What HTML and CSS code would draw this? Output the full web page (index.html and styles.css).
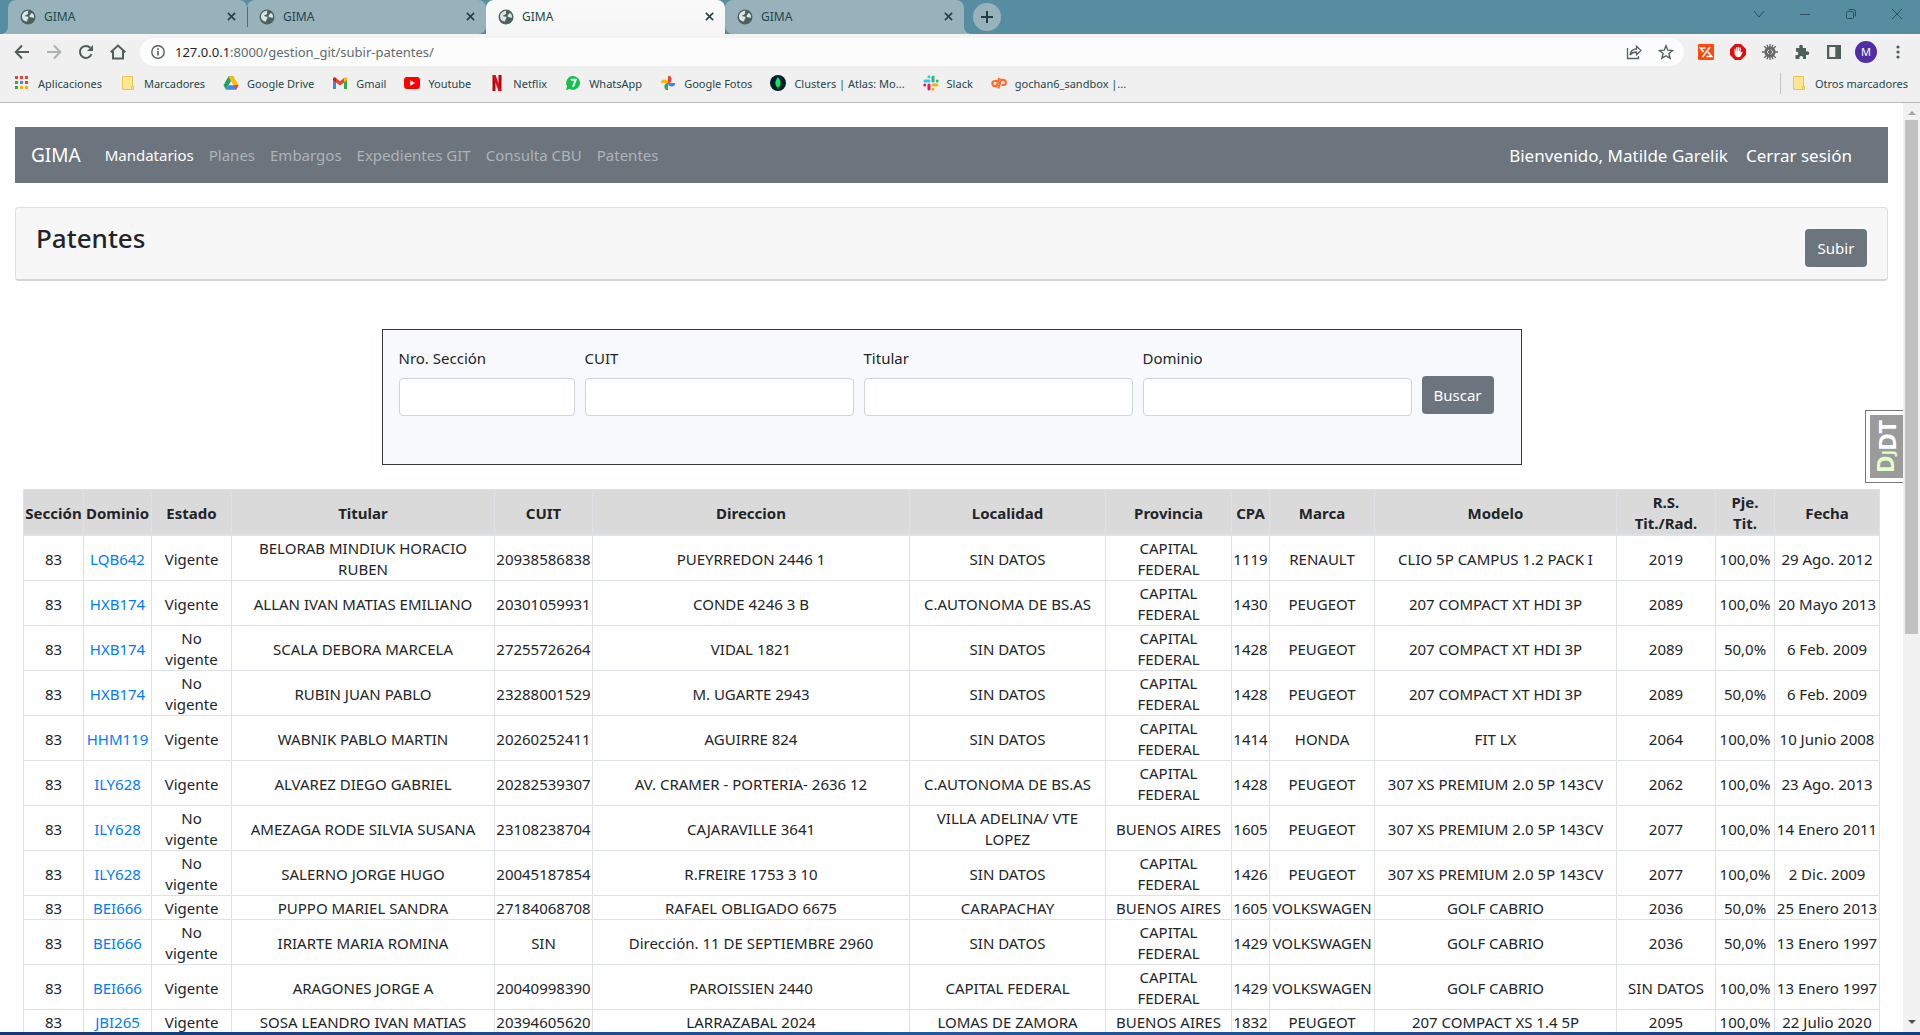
FILE: index.html
```html
<!DOCTYPE html>
<html lang="es">
<head>
<meta charset="utf-8">
<title>GIMA</title>
<link rel="stylesheet" href="styles.css">
</head>
<body>
<svg class="defs" aria-hidden="true">
  <symbol id="globe" viewBox="0 0 16 16"><circle cx="8" cy="8" r="7.5" fill="#4c615c"/><path d="M8.6 1.8c-1 .9-.9 2-.3 2.600.2.5-.9.700-1.200 1.100C6.500 6.300 5 6.200 4.800 7.200c1.400.3 3.200-.2 3.700 1.200.3 1-.9 1.500-1.100 2.300-.2.900-.1 1.700-1.300 1.900C3.400 12 1.900 10 2 7.300 2.300 4.100 5.300 1.600 8.600 1.800z" fill="#dbe6e6"/><path d="M11 4.500c.6-.5 1.500-.4 2 .2.700 1 1.200 2.400 1 3.800-.9.700-1.900-.1-3-.2-1-.1-2-.9-1.300-1.900.4-.6 1-.9 1.300-1.900z" fill="#dbe6e6"/></symbol>
  <symbol id="close" viewBox="0 0 10 10"><path d="M1 1l8 8M9 1L1 9" stroke="#213f40" stroke-width="1.700" fill="none"/></symbol>
  <symbol id="folder" viewBox="0 0 16 16"><path d="M2.500 1.500h10v10h1v3h-11z" fill="#ffe694" stroke="#e8c64e"/><path d="M11.500 14.500v-3h2v3z" fill="#ffe694" stroke="#e8c64e"/></symbol>
</svg>

<header class="browser">
  <div class="tabstrip">
    <div class="tab tab-first"><svg class="favicon"><use href="#globe"/></svg><span>GIMA</span><button class="tab-close" aria-label="Cerrar pestaña"><svg><use href="#close"/></svg></button></div>
    <div class="tab tab-divided"><svg class="favicon"><use href="#globe"/></svg><span>GIMA</span><button class="tab-close" aria-label="Cerrar pestaña"><svg><use href="#close"/></svg></button></div>
    <div class="tab tab-active"><svg class="favicon"><use href="#globe"/></svg><span>GIMA</span><button class="tab-close" aria-label="Cerrar pestaña"><svg><use href="#close"/></svg></button></div>
    <div class="tab tab-last"><svg class="favicon"><use href="#globe"/></svg><span>GIMA</span><button class="tab-close" aria-label="Cerrar pestaña"><svg><use href="#close"/></svg></button></div>
    <button class="new-tab" aria-label="Nueva pestaña"><svg width="14" height="14" viewBox="0 0 14 14"><path d="M7 1v12M1 7h12" stroke="#213f40" stroke-width="2"/></svg></button>
    <div class="window-controls">
      <button aria-label="Buscar pestañas"><svg width="12" height="12" viewBox="0 0 12 12"><path d="M1 3l5 6 5-6"/></svg></button>
      <button aria-label="Minimizar"><svg width="12" height="12" viewBox="0 0 12 12"><path d="M1 6.500h10"/></svg></button>
      <button aria-label="Restaurar"><svg width="12" height="12" viewBox="0 0 12 12"><rect x="1.500" y="3.500" width="7" height="7" rx="1"/><path d="M3.500 1.500h5a2 2 0 0 1 2 2v5"/></svg></button>
      <button aria-label="Cerrar"><svg width="12" height="12" viewBox="0 0 12 12"><path d="M1 1l10 10M11 1L1 11"/></svg></button>
    </div>
  </div>

  <div class="toolbar">
    <button class="tool" aria-label="Atrás"><svg width="16" height="16" viewBox="0 0 16 16"><path d="M15 8H2M8 1.500L1.800 8 8 14.500" fill="none" stroke="#4c615c" stroke-width="2"/></svg></button>
    <button class="tool" aria-label="Adelante"><svg width="16" height="16" viewBox="0 0 16 16"><path d="M1 8h13M8 1.500L14.200 8 8 14.500" fill="none" stroke="#abb3b1" stroke-width="2"/></svg></button>
    <button class="tool" aria-label="Recargar"><svg width="16" height="16" viewBox="0 0 16 16"><path d="M13.500 10.200A6 6 0 1 1 12.300 3.800" fill="none" stroke="#4c615c" stroke-width="2"/><path d="M15 1v6H9z" fill="#4c615c"/></svg></button>
    <button class="tool" aria-label="Inicio"><svg width="16" height="16" viewBox="0 0 16 16"><path d="M.7 8.200L8 1.500l7.300 6.700M3 7v7.500h10V7" fill="none" stroke="#4c615c" stroke-width="2"/></svg></button>
    <div class="omnibox">
      <svg width="14" height="14" viewBox="0 0 14 14"><circle cx="7" cy="7" r="6.200" fill="none" stroke="#53605f" stroke-width="1.400"/><path d="M7 6v4.500M7 3.200v1.600" stroke="#53605f" stroke-width="1.600"/></svg>
      <span class="url"><b>127.0.0.1</b>:8000/gestion_git/subir-patentes/</span>
      <button class="tool" aria-label="Compartir"><svg width="16" height="16" viewBox="0 0 16 16" fill="none" stroke="#53605f" stroke-width="1.300"><path d="M1.500 4v10.500h11V12"/><path d="M4 11c.6-4 3-6 6.500-6V2.200L15 6.500l-4.500 4.300V8C7.500 8 5.500 9 4 11z"/></svg></button>
      <button class="tool" aria-label="Añadir a marcadores"><svg width="16" height="16" viewBox="0 0 16 16"><path d="M8 1.800l1.800 4.400 4.700.3-3.600 3 1.200 4.700L8 11.700l-4.100 2.500 1.200-4.700-3.600-3 4.700-.3z" fill="none" stroke="#53605f" stroke-width="1.400"/></svg></button>
    </div>
    <button class="tool" aria-label="Extensión"><svg width="16" height="16" viewBox="0 0 16 16"><rect width="16" height="16" rx="1" fill="#ff4a0b"/><path d="M7.500 4H2.500l3 4M12 3L4.500 13M8.500 12.500h5l-3.500-4.500" fill="none" stroke="#fff" stroke-width="1.700"/></svg></button>
    <button class="tool" aria-label="Bloqueador"><svg width="16" height="16" viewBox="0 0 16 16"><path d="M5 0h6l5 5v6l-5 5H5l-5-5V5z" fill="#e40d0d"/><path d="M4.500 8.500V5.200c0-.8 1-.8 1 0V7h.6V3.700c0-.9 1.200-.9 1.200 0V7h.5V3.200c0-.9 1.200-.9 1.200 0V7h.5V4c0-.9 1.200-.9 1.200 0v5l.8-1.100c.6-.6 1.300-.1 1 .6L10.800 12c-.4.8-1.100 1.200-2.300 1.200-2.700 0-4-1.500-4-4.700z" fill="#fff"/></svg></button>
    <button class="tool" aria-label="Depurador"><svg width="16" height="16" viewBox="0 0 16 16"><path d="M8 0v16M0 8h16M2.300 2.300l11.400 11.400M13.700 2.300L2.300 13.700M5 .8l6 14.400M11 .8L5 15.200" stroke="#666" stroke-width="1.300"/><circle cx="8" cy="8" r="5.600" fill="#686868"/><path d="M7 6L5 8l2 2M9 5.500L11 8l-2 2.300" fill="none" stroke="#ddd"/></svg></button>
    <button class="tool" aria-label="Extensiones"><svg width="16" height="16" viewBox="0 0 16 16"><path d="M2 4h3.500C4.700 2 5.600.8 7 .8S9.300 2 8.700 4H12v3.600c2-.7 3.200.2 3.200 1.600S14 11.500 12 10.700V15H9c.4-2-.4-2.900-1.800-2.900S5 13 5.500 15H1.500v-4c1.800.5 2.800-.3 2.800-1.500S3.200 7.500 2 8z" fill="#4c615c"/></svg></button>
    <button class="tool" aria-label="Panel lateral"><svg width="16" height="16" viewBox="0 0 16 16"><path d="M1 1h14v14H1zM3.300 3v10h6V3z" fill="#4c615c" fill-rule="evenodd"/></svg></button>
    <button class="avatar" aria-label="Perfil">M</button>
    <button class="tool" aria-label="Menú"><svg width="16" height="16" viewBox="0 0 16 16" fill="#4c615c"><circle cx="8" cy="3" r="1.600"/><circle cx="8" cy="8" r="1.600"/><circle cx="8" cy="13" r="1.600"/></svg></button>
  </div>

  <nav class="bookmarks">
    <a href="#"><svg viewBox="0 0 16 16"><path d="M1 1h3v3H1zM6 1h3v3H6zM11 1h3v3h-3z" fill="#ea4335"/><path d="M1 6h3v3H1z" fill="#34a853"/><path d="M6 6h3v3H6z" fill="#4285f4"/><path d="M11 6h3v3h-3z" fill="#e94335"/><path d="M1 11h3v3H1z" fill="#34a853"/><path d="M6 11h3v3H6zM11 11h3v3h-3z" fill="#fbb00a"/></svg>Aplicaciones</a>
    <a href="#"><svg><use href="#folder"/></svg>Marcadores</a>
    <a href="#"><svg viewBox="0 0 16 16"><path d="M5.400 1.500h5.200L8 6z" fill="#188038"/><path d="M5.400 1.500L8 6l-5 8.700L.5 10.200z" fill="#1ea362"/><path d="M10.600 1.500l5 8.700h-5.200L5.400 1.500z" fill="#fbbc04"/><path d="M5.600 10.200h10L13 14.700H3z" fill="#4285f4"/><path d="M15.600 10.200L13 14.700l-2.600-4.500z" fill="#ea4335"/></svg>Google Drive</a>
    <a href="#"><svg viewBox="0 0 16 16"><path d="M1 3.500l3 2.300V14H1z" fill="#4285f4"/><path d="M15 3.500l-3 2.300V14h3z" fill="#34a853"/><path d="M4 3l4 3.200L12 3v4.600l-4 3-4-3z" fill="#ea4335"/><path d="M1 5V4c0-2 2-2.200 3-1v4.600z" fill="#c5221f"/><path d="M15 5V4c0-2-2-2.200-3-1v4.600z" fill="#fbbc04"/></svg>Gmail</a>
    <a href="#"><svg viewBox="0 0 16 16"><rect y="2" width="16" height="12" rx="3" fill="#f00"/><path d="M6.200 5.200L11 8l-4.800 2.800z" fill="#fff"/></svg>Youtube</a>
    <a href="#"><svg viewBox="0 0 16 16"><path d="M3.500 0h3v16h-3zM9.500 0h3v16h-3z" fill="#b1060f"/><path d="M3.500 0h3l6 16h-3z" fill="#e50914"/></svg>Netflix</a>
    <a href="#"><svg viewBox="0 0 16 16"><path d="M8.200 1a6.900 6.900 0 1 1-3.300 13L1 15l1.100-3.700A6.900 6.900 0 0 1 8.200 1z" fill="#12c24b"/><path d="M5.700 4.800h5L8 11.800" fill="none" stroke="#fff" stroke-width="2"/></svg>WhatsApp</a>
    <a href="#"><svg viewBox="0 0 16 16"><path d="M8 8V.8a3.600 3.600 0 0 1 0 7.200z" fill="#ea4335"/><path d="M8 8h7.200A3.600 3.600 0 0 1 8 8z" fill="#4285f4"/><path d="M8 8v7.200A3.600 3.600 0 0 1 8 8z" fill="#34a853"/><path d="M8 8H.8A3.600 3.600 0 0 1 8 8z" fill="#fbbc04"/></svg>Google Fotos</a>
    <a href="#"><svg viewBox="0 0 16 16"><circle cx="8" cy="8" r="8" fill="#001e2b"/><path d="M8 2c3.600 4.500 3.300 8 .3 10.500V14h-.6v-1.500C4.700 10 4.400 6.500 8 2z" fill="#00ed64"/></svg>Clusters | Atlas: Mo...</a>
    <a href="#"><svg viewBox="0 0 16 16" fill="none" stroke-width="3" stroke-linecap="round"><path d="M6 1.800v0M2 6h4" stroke="#36c5f0"/><path d="M10 2v4M14.200 6v0" stroke="#2eb67d"/><path d="M14 10h-4M10 14.200v0" stroke="#ecb22e"/><path d="M6 14v-4M1.800 10v0" stroke="#e01e5a"/></svg>Slack</a>
    <a href="#"><svg viewBox="0 0 16 16" fill="none" stroke="#ff6c2c" stroke-width="2.200"><path d="M6.500 6H4a2.600 2.600 0 0 0 0 5.200H5.500L8.300 3"/><path d="M7.300 13.500L10 4.800h2.200a2.600 2.600 0 0 1 0 5.200H10.500"/></svg>gochan6_sandbox |...</a>
    <a href="#" class="other"><svg><use href="#folder"/></svg>Otros marcadores</a>
  </nav>
</header>

<div class="viewport">
  <main class="page">
    <nav class="navbar">
      <a href="#" class="brand">GIMA</a>
      <div class="nav-links">
        <a href="#" class="nav-current">Mandatarios</a>
        <a href="#">Planes</a>
        <a href="#">Embargos</a>
        <a href="#">Expedientes GIT</a>
        <a href="#">Consulta CBU</a>
        <a href="#">Patentes</a>
      </div>
      <div class="session"><span>Bienvenido, Matilde Garelik</span><a href="#">Cerrar sesión</a></div>
    </nav>

    <section class="title-card">
      <h1>Patentes</h1>
      <button class="btn">Subir</button>
    </section>

    <form class="search">
      <div class="field"><label for="seccion">Nro. Sección</label><input id="seccion" type="text"></div>
      <div class="field"><label for="cuit">CUIT</label><input id="cuit" type="text"></div>
      <div class="field"><label for="titular">Titular</label><input id="titular" type="text"></div>
      <div class="field"><label for="dominio">Dominio</label><input id="dominio" type="text"></div>
      <button class="btn" type="button">Buscar</button>
    </form>

    <table class="plates">
      <colgroup><col class="c-seccion"><col class="c-dominio"><col class="c-estado"><col class="c-titular"><col class="c-cuit"><col class="c-direccion"><col class="c-localidad"><col class="c-provincia"><col class="c-cpa"><col class="c-marca"><col class="c-modelo"><col class="c-rs"><col class="c-pje"><col class="c-fecha"></colgroup>
      <thead>
        <tr><th>Sección</th><th>Dominio</th><th>Estado</th><th>Titular</th><th>CUIT</th><th>Direccion</th><th>Localidad</th><th>Provincia</th><th>CPA</th><th>Marca</th><th>Modelo</th><th>R.S.<br>Tit./Rad.</th><th>Pje.<br>Tit.</th><th>Fecha</th></tr>
      </thead>
      <tbody>
        <tr><td>83</td><td><a href="#">LQB642</a></td><td>Vigente</td><td>BELORAB MINDIUK HORACIO<br>RUBEN</td><td>20938586838</td><td>PUEYRREDON 2446 1</td><td>SIN DATOS</td><td>CAPITAL<br>FEDERAL</td><td>1119</td><td>RENAULT</td><td>CLIO 5P CAMPUS 1.2 PACK I</td><td>2019</td><td>100,0%</td><td>29 Ago. 2012</td></tr>
        <tr><td>83</td><td><a href="#">HXB174</a></td><td>Vigente</td><td>ALLAN IVAN MATIAS EMILIANO</td><td>20301059931</td><td>CONDE 4246 3 B</td><td>C.AUTONOMA DE BS.AS</td><td>CAPITAL<br>FEDERAL</td><td>1430</td><td>PEUGEOT</td><td>207 COMPACT XT HDI 3P</td><td>2089</td><td>100,0%</td><td>20 Mayo 2013</td></tr>
        <tr><td>83</td><td><a href="#">HXB174</a></td><td>No<br>vigente</td><td>SCALA DEBORA MARCELA</td><td>27255726264</td><td>VIDAL 1821</td><td>SIN DATOS</td><td>CAPITAL<br>FEDERAL</td><td>1428</td><td>PEUGEOT</td><td>207 COMPACT XT HDI 3P</td><td>2089</td><td>50,0%</td><td>6 Feb. 2009</td></tr>
        <tr><td>83</td><td><a href="#">HXB174</a></td><td>No<br>vigente</td><td>RUBIN JUAN PABLO</td><td>23288001529</td><td>M. UGARTE 2943</td><td>SIN DATOS</td><td>CAPITAL<br>FEDERAL</td><td>1428</td><td>PEUGEOT</td><td>207 COMPACT XT HDI 3P</td><td>2089</td><td>50,0%</td><td>6 Feb. 2009</td></tr>
        <tr><td>83</td><td><a href="#">HHM119</a></td><td>Vigente</td><td>WABNIK PABLO MARTIN</td><td>20260252411</td><td>AGUIRRE 824</td><td>SIN DATOS</td><td>CAPITAL<br>FEDERAL</td><td>1414</td><td>HONDA</td><td>FIT LX</td><td>2064</td><td>100,0%</td><td>10 Junio 2008</td></tr>
        <tr><td>83</td><td><a href="#">ILY628</a></td><td>Vigente</td><td>ALVAREZ DIEGO GABRIEL</td><td>20282539307</td><td>AV. CRAMER - PORTERIA- 2636 12</td><td>C.AUTONOMA DE BS.AS</td><td>CAPITAL<br>FEDERAL</td><td>1428</td><td>PEUGEOT</td><td>307 XS PREMIUM 2.0 5P 143CV</td><td>2062</td><td>100,0%</td><td>23 Ago. 2013</td></tr>
        <tr><td>83</td><td><a href="#">ILY628</a></td><td>No<br>vigente</td><td>AMEZAGA RODE SILVIA SUSANA</td><td>23108238704</td><td>CAJARAVILLE 3641</td><td>VILLA ADELINA/ VTE<br>LOPEZ</td><td>BUENOS AIRES</td><td>1605</td><td>PEUGEOT</td><td>307 XS PREMIUM 2.0 5P 143CV</td><td>2077</td><td>100,0%</td><td>14 Enero 2011</td></tr>
        <tr><td>83</td><td><a href="#">ILY628</a></td><td>No<br>vigente</td><td>SALERNO JORGE HUGO</td><td>20045187854</td><td>R.FREIRE 1753 3 10</td><td>SIN DATOS</td><td>CAPITAL<br>FEDERAL</td><td>1426</td><td>PEUGEOT</td><td>307 XS PREMIUM 2.0 5P 143CV</td><td>2077</td><td>100,0%</td><td>2 Dic. 2009</td></tr>
        <tr><td>83</td><td><a href="#">BEI666</a></td><td>Vigente</td><td>PUPPO MARIEL SANDRA</td><td>27184068708</td><td>RAFAEL OBLIGADO 6675</td><td>CARAPACHAY</td><td>BUENOS AIRES</td><td>1605</td><td>VOLKSWAGEN</td><td>GOLF CABRIO</td><td>2036</td><td>50,0%</td><td>25 Enero 2013</td></tr>
        <tr><td>83</td><td><a href="#">BEI666</a></td><td>No<br>vigente</td><td>IRIARTE MARIA ROMINA</td><td>SIN</td><td>Dirección. 11 DE SEPTIEMBRE 2960</td><td>SIN DATOS</td><td>CAPITAL<br>FEDERAL</td><td>1429</td><td>VOLKSWAGEN</td><td>GOLF CABRIO</td><td>2036</td><td>50,0%</td><td>13 Enero 1997</td></tr>
        <tr><td>83</td><td><a href="#">BEI666</a></td><td>Vigente</td><td>ARAGONES JORGE A</td><td>20040998390</td><td>PAROISSIEN 2440</td><td>CAPITAL FEDERAL</td><td>CAPITAL<br>FEDERAL</td><td>1429</td><td>VOLKSWAGEN</td><td>GOLF CABRIO</td><td>SIN DATOS</td><td>100,0%</td><td>13 Enero 1997</td></tr>
        <tr><td>83</td><td><a href="#">JBI265</a></td><td>Vigente</td><td>SOSA LEANDRO IVAN MATIAS</td><td>20394605620</td><td>LARRAZABAL 2024</td><td>LOMAS DE ZAMORA</td><td>BUENOS AIRES</td><td>1832</td><td>PEUGEOT</td><td>207 COMPACT XS 1.4 5P</td><td>2095</td><td>100,0%</td><td>22 Julio 2020</td></tr>
      </tbody>
    </table>
    <button class="debug-handle" aria-label="Django Debug Toolbar"><span class="debug-label"><span class="debug-dj">D<small>J</small></span>DT</span></button>
  </main>
  <div class="scrollbar">
    <svg width="8" height="4" viewBox="0 0 8 4"><path d="M0 4l4-4 4 4z" fill="#a3a3a3"/></svg>
    <div class="track"><div class="thumb"></div></div>
    <svg width="8" height="4" viewBox="0 0 8 4"><path d="M0 0l4 4 4-4z" fill="#505050"/></svg>
  </div>
</div>
<div class="desktop-edge"></div>
</body>
</html>
```
FILE: styles.css
```css
* { box-sizing: border-box; }
html, body { height: 100%; }
body {
  margin: 0;
  display: flex;
  flex-direction: column;
  overflow: hidden;
  background: #fff;
  color: #212529;
  font: 15px/21px "Noto Sans", "Open Sans", sans-serif;
}
a { color: inherit; text-decoration: none; }
button { font: inherit; color: inherit; border: 0; padding: 0; background: none; }
svg { display: block; flex: none; }
.defs { position: absolute; width: 0; height: 0; }

/* Browser window */
.browser { flex: none; background: #f0f0f0; border-bottom: 1px solid #b9b9b9; color: #24474a; }
.tabstrip { display: flex; height: 34px; padding-left: 8px; background: #568da1; }
.tab {
  position: relative;
  display: flex;
  align-items: center;
  gap: 8px;
  flex: 0 1 239px;
  padding: 0 11px 1px 12px;
  background: #97b2bb;
  border-radius: 8px;
  font-size: 12px;
}
.tab-active { background: linear-gradient(#fafafa, #f5f5f5); border-radius: 8px 8px 0 0; }
.tab-first { border-bottom-left-radius: 0; border-bottom-right-radius: 0; }
.tab-divided { border-bottom-left-radius: 0; }
.tab-last { border-bottom-right-radius: 0; }
.tab-first::before, .tab-last::after {
  content: "";
  position: absolute;
  bottom: 0;
  width: 8px;
  height: 8px;
}
.tab-first::before { left: -8px; background: radial-gradient(circle at 0 0, transparent 8px, #97b2bb 8px); }
.tab-last::after { right: -8px; background: radial-gradient(circle at 100% 0, transparent 8px, #97b2bb 8px); }
.tab-divided::before {
  content: "";
  position: absolute;
  left: 0;
  top: 7px;
  width: 1px;
  height: 20px;
  background: #486f79;
}
.favicon { width: 16px; height: 16px; }
.tab-close { margin-left: auto; }
.tab-close svg { width: 9px; height: 9px; }
.new-tab {
  display: grid;
  place-items: center;
  align-self: center;
  width: 28px;
  height: 28px;
  margin-left: 9px;
  border-radius: 50%;
  background: #97b2bb;
}
.window-controls { display: flex; gap: 34px; margin-left: auto; padding: 8px 17px 0 0; height: 20px; }
.window-controls svg { fill: none; stroke: #2f4f5a; stroke-width: 1; }

.toolbar {
  display: flex;
  align-items: center;
  gap: 16px;
  height: 36px;
  padding: 0 14px;
  background: linear-gradient(#f5f5f5, #f0f0f0 8px);
}
.omnibox {
  flex: 1;
  display: flex;
  align-items: center;
  gap: 16px;
  height: 28px;
  margin: 0 -2px;
  padding: 0 10px 0 11px;
  border-radius: 14px;
  background: #fcfcfc;
  font-size: 13px;
  color: #5f6b6e;
}
.url { flex: 1; margin-left: -6px; }
.url b { font-weight: 400; color: #1f2527; }
.avatar {
  width: 22px;
  height: 22px;
  margin: 0 -3px;
  border-radius: 50%;
  background: #512da8;
  color: #fff;
  font-size: 11px;
  line-height: 22px;
}
.bookmarks { display: flex; align-items: center; gap: 18px; height: 32px; padding: 0 12px 6px 14px; font-size: 11px; }
.bookmarks a { display: flex; align-items: center; gap: 8px; white-space: nowrap; }
.bookmarks svg { width: 16px; height: 16px; }
.bookmarks .other { margin-left: auto; padding-left: 10px; border-left: 1px solid #c0c4c4; }

/* Page */
.viewport { flex: 1; min-height: 0; display: flex; }
.page { position: relative; flex: 1; min-width: 0; overflow: hidden; padding: 24px 15px 0; }
.navbar { display: flex; align-items: center; height: 56px; padding: 0 36px 0 16px; background: #6c757d; color: #fff; }
.brand { margin-right: 24px; font-size: 19px; }
.nav-links { display: flex; gap: 15px; color: #aeb3b7; }
.nav-current { color: #fff; }
.session { display: flex; gap: 18px; margin-left: auto; font-size: 17px; }
.title-card {
  display: flex;
  justify-content: space-between;
  align-items: flex-start;
  height: 74px;
  margin-top: 24px;
  padding: 14px 20px 0;
  border: 1px solid #dfdfdf;
  border-bottom: 2px solid #d5d5d5;
  border-radius: 4px;
  background: #f7f7f7;
}
h1 { margin: 0; font-size: 26px; line-height: 32px; font-weight: 500; }
.btn { min-width: 62px; height: 38px; padding: 0 12px; border-radius: 4px; background: #6c757d; color: #fff; }
.title-card .btn { margin-top: 7px; }
.search {
  display: grid;
  grid-template-columns: 176px 1fr 1fr 1fr 72px;
  gap: 10px;
  max-width: 1140px;
  height: 136px;
  margin: 48px auto 24px;
  padding: 18px 27px 0 16px;
  border: 1px solid #343a40;
  background: #f8f9fc;
}
.search .btn { margin-top: 28px; }
.field { display: flex; flex-direction: column; gap: 9px; }
.field input {
  width: 100%;
  height: 38px;
  padding: 6px 12px;
  border: 1px solid #ced4da;
  border-radius: 4px;
  background: #fff;
  font: inherit;
}
.plates {
  width: calc(100% - 16px);
  margin-left: 8px;
  table-layout: fixed;
  border-collapse: collapse;
  text-align: center;
  white-space: nowrap;
}
.plates th, .plates td { padding: 2px 0 0; border: 1px solid #dee2e6; vertical-align: middle; }
.plates th { background: #dadada; border-bottom-width: 2px; font-weight: 700; }
.plates td a { color: #007bff; }
.c-seccion { width: 60px; }
.c-dominio { width: 68px; }
.c-estado { width: 80px; }
.c-titular { width: 263px; }
.c-cuit { width: 98px; }
.c-direccion { width: 317px; }
.c-localidad { width: 196px; }
.c-provincia { width: 126px; }
.c-cpa { width: 38px; }
.c-marca { width: 105px; }
.c-modelo { width: 242px; }
.c-rs { width: 99px; }
.c-pje { width: 59px; }
.c-fecha { width: 105px; }

/* Debug toolbar handle, floating over the page edge */
.debug-handle {
  position: absolute;
  top: 307px;
  right: 0;
  width: 38px;
  height: 73px;
  padding: 4px 0 4px 4px;
  border: 1px solid #777;
  border-right: 0;
  background: #fff;
}
.debug-label {
  display: flex;
  align-items: center;
  justify-content: center;
  height: 100%;
  padding-right: 3px;
  background: #9b9b9b;
  color: #fff;
  font-size: 24px;
  line-height: 30px;
  font-weight: 700;
  writing-mode: sideways-lr;
}
.debug-dj { color: #e3ffcb; }
.debug-dj small { font-size: 16px; }

.scrollbar { flex: none; display: flex; flex-direction: column; align-items: center; width: 17px; padding: 8px 0; background: #f1f1f1; }
.track { flex: 1; width: 13px; padding: 5px 0; }
.thumb { height: calc(57% + 4px); background: #c1c1c1; }
.desktop-edge { flex: none; height: 3px; background: linear-gradient(90deg, #123a72, #24579f, #153f7c); }
```
